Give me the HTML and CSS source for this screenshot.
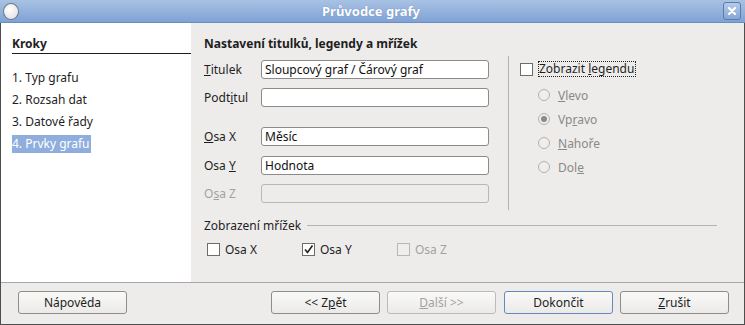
FILE: index.html
```html
<!DOCTYPE html>
<html lang="cs">
<head>
    <meta charset="UTF-8">
    <title>Průvodce grafy</title>
    <link rel="stylesheet" href="styles.css">
</head>
<body>
    <div id="window">
        <div id="titlebar">
            <span class="app-icon"></span>
            <span class="title">Průvodce grafy</span>
            <span class="close-btn">
                <svg width="10" height="10" viewBox="0 0 10 10"><path d="M2 2 L8 8 M8 2 L2 8" stroke="#fff" stroke-width="2.2" stroke-linecap="round"/></svg>
            </span>
        </div>

        <div id="main">
            <div id="steps">
                <h3>Kroky</h3>
                <ul>
                    <li>1. Typ grafu</li>
                    <li>2. Rozsah dat</li>
                    <li>3. Datové řady</li>
                    <li><span class="selected">4. Prvky grafu</span></li>
                </ul>
            </div>

            <div id="content">
                <h3>Nastavení titulků, legendy a mřížek</h3>
                <div id="top-row">
                    <div id="fields">
                        <div class="field">
                            <label><u>T</u>itulek</label>
                            <input type="text" value="Sloupcový graf / Čárový graf">
                        </div>
                        <div class="field">
                            <label>Podt<u>i</u>tul</label>
                            <input type="text" value="">
                        </div>
                        <div class="field gap">
                            <label><u>O</u>sa X</label>
                            <input type="text" value="Měsíc">
                        </div>
                        <div class="field">
                            <label>Osa <u>Y</u></label>
                            <input type="text" value="Hodnota">
                        </div>
                        <div class="field disabled">
                            <label>O<u>s</u>a Z</label>
                            <input type="text" value="" disabled>
                        </div>
                    </div>
                    <div id="legend">
                        <div class="check-row">
                            <span class="box"></span>
                            <span class="focus">Zobrazit <u>l</u>egendu</span>
                        </div>
                        <div class="radio-row"><span class="radio"></span><span><u>V</u>levo</span></div>
                        <div class="radio-row"><span class="radio on"></span><span>Vp<u>r</u>avo</span></div>
                        <div class="radio-row"><span class="radio"></span><span><u>N</u>ahoře</span></div>
                        <div class="radio-row"><span class="radio"></span><span>Dol<u>e</u></span></div>
                    </div>
                </div>

                <div id="grid-title">
                    <span>Zobrazení mřížek</span>
                    <span class="line"></span>
                </div>
                <div id="grid-checks">
                    <div class="grid-check"><span class="box"></span>Osa X</div>
                    <div class="grid-check">
                        <span class="box">
                            <svg width="11" height="11" viewBox="0 0 11 11"><path d="M2 5.5 L4.5 8.5 L9.5 1.5" fill="none" stroke="#222" stroke-width="1.6"/></svg>
                        </span>Osa Y
                    </div>
                    <div class="grid-check disabled"><span class="box"></span>Osa Z</div>
                </div>
            </div>
        </div>

        <div id="buttons">
            <button class="help">Nápověda</button>
            <div class="nav">
                <button>&lt;&lt; Z<u>p</u>ět</button>
                <button class="off"><u>D</u>alší &gt;&gt;</button>
                <button class="default">Dokončit</button>
                <button><u>Z</u>rušit</button>
            </div>
        </div>
    </div>
</body>
</html>
```

FILE: styles.css
```css
body {
    margin: 0;
    font-family: "Noto Sans", "DejaVu Sans", sans-serif;
    font-size: 12px;
    color: #1e1e1e;
}
#window {
    width: 745px;
    height: 325px;
    box-sizing: border-box;
    border: 1px solid #4e4e4e;
    border-top: none;
    background-color: #edeceb;
    display: flex;
    flex-direction: column;
}
#titlebar {
    height: 22px;
    margin: 0 -1px;
    background: linear-gradient(#a9c2e4, #7fa2d5);
    border-bottom: 1px solid #6a8cc0;
    display: flex;
    align-items: center;
    justify-content: space-between;
    padding: 0 4px 0 3px;
}
.app-icon {
    width: 14px;
    height: 15px;
    border-radius: 50%;
    background: radial-gradient(circle at 40% 35%, #ffffff, #dcdcdc);
    border: 1px solid #6d7a8c;
}
.title {
    color: white;
    font-weight: bold;
    font-size: 13px;
    text-shadow: 0 0 1px #5f7fae;
}
.close-btn {
    width: 16px;
    height: 16px;
    border: 1px solid #5b7bab;
    border-radius: 3px;
    background: linear-gradient(#b5cbea, #86a6d6);
    display: flex;
    align-items: center;
    justify-content: center;
}
#main {
    display: flex;
    height: 259px;
    border-bottom: 1px solid #a8a7a5;
}
#steps {
    width: 179px;
    background-color: white;
    padding-left: 11px;
}
#steps h3 {
    margin: 13px 0 0 0;
    font-size: 12px;
    padding-bottom: 1px;
    border-bottom: 1px solid #1e1e1e;
    line-height: 16px;
}
#steps ul {
    list-style: none;
    margin: 16px 0 0 0;
    padding: 0;
}
#steps li {
    height: 22px;
    line-height: 16px;
}
.selected {
    background-color: #8faedd;
    color: white;
    padding: 0 1px 1px 0;
}
#content {
    flex: 1;
    padding: 0 27px 0 13px;
}
#content h3 {
    margin: 13px 0 0 0;
    font-size: 12px;
    line-height: 16px;
}
#top-row {
    display: flex;
    margin-top: 4px;
}
#fields {
    width: 286px;
    padding-top: 4px;
    border-right: 1px solid #b4b3b1;
    padding-right: 18px;
    height: 150px;
}
.field {
    display: flex;
    align-items: center;
    height: 19px;
    margin-bottom: 9px;
}
.field.gap {
    margin-top: 20px;
    margin-bottom: 10px;
}
.field label {
    width: 57px;
}
.field input {
    width: 228px;
    height: 19px;
    box-sizing: border-box;
    border: 1px solid #8c8b89;
    border-radius: 3px;
    font: inherit;
    color: #111;
    padding: 0 3px;
    background: white;
}
.field.disabled label {
    color: #a3a2a0;
}
.field.disabled input {
    background-color: #edeceb;
    border-color: #b8b7b5;
}
#legend {
    padding: 5px 0 0 11px;
}
.check-row {
    display: flex;
    align-items: center;
    gap: 5px;
}
.box {
    width: 11px;
    height: 11px;
    border: 1px solid #6e6d6b;
    background: white;
    display: inline-flex;
    align-items: center;
    justify-content: center;
}
.focus {
    border: 1px dotted #222;
    line-height: 14px;
    padding: 0 1px 0 0;
}
.radio-row {
    display: flex;
    align-items: center;
    gap: 8px;
    margin-left: 18px;
    height: 24px;
    color: #8a8987;
}
.radio-row:nth-child(2) {
    margin-top: 6px;
}
.radio {
    width: 10px;
    height: 10px;
    border: 1px solid #b3b2b0;
    border-radius: 50%;
    background: #efeeed;
    display: inline-flex;
    align-items: center;
    justify-content: center;
}
.radio.on::after {
    content: "";
    width: 6px;
    height: 6px;
    border-radius: 50%;
    background: #8a8987;
}
#grid-title {
    display: flex;
    align-items: center;
    gap: 6px;
    margin-top: 7px;
    height: 16px;
}
.line {
    flex: 1;
    border-top: 1px solid #b4b3b1;
}
#grid-checks {
    display: flex;
    margin-top: 8px;
    padding-left: 3px;
}
.grid-check {
    display: flex;
    align-items: center;
    gap: 5px;
    width: 95px;
}
.grid-check.disabled {
    color: #a3a2a0;
}
.grid-check.disabled .box {
    border-color: #b8b7b5;
    background: #efeeed;
}
#buttons {
    display: flex;
    justify-content: space-between;
    padding: 8px 15px 0 17px;
}
button {
    width: 109px;
    height: 23px;
    font: inherit;
    color: #1e1e1e;
    border: 1px solid #8e8d8b;
    border-radius: 3px;
    background: linear-gradient(#f9f9f8, #ebeae8);
    padding: 0;
}
.nav {
    display: flex;
    gap: 7px;
}
.nav .default {
    margin-left: 1px;
    border-color: #6489bb;
}
.off {
    color: #a3a2a0;
    border-color: #bcbbb9;
}
```
